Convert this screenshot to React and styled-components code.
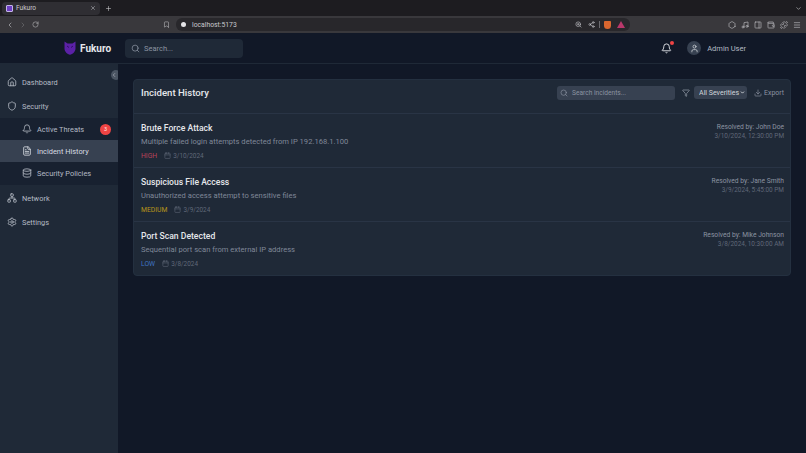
import React from "react";
import styled, { createGlobalStyle } from "styled-components";
import {
  Bell,
  Bookmark,
  Calendar,
  ChevronDown,
  ChevronLeft,
  ChevronRight,
  Database,
  Download,
  FileText,
  Filter,
  Home,
  Menu,
  Music,
  Network,
  Plus,
  Puzzle,
  RotateCw,
  Search,
  Settings,
  Share2,
  Shield,
  User,
  Wallet,
  X,
  ZoomIn,
  PanelRight,
  Hexagon,
} from "lucide-react";

const GlobalStyle = createGlobalStyle`
  html, body, #root { margin: 0; height: 100%; }
  body { background: #111827; font-family: Roboto, "Noto Sans", sans-serif; overflow: hidden; }
  * { box-sizing: border-box; }
`;

const Page = styled.div`
  width: 806px;
  height: 453px;
  display: flex;
  flex-direction: column;
  overflow: hidden;
`;

/* browser chrome */
const TabStrip = styled.div`
  height: 16px;
  background: #1d1c20;
  display: flex;
  align-items: center;
  padding-left: 2px;
  color: #c9c9cc;
`;
const Tab = styled.div`
  width: 98px;
  height: 13px;
  background: #2f2e33;
  border-radius: 4px;
  display: flex;
  align-items: center;
  gap: 3px;
  padding: 0 4px;
  font-size: 6.6px;
  color: #c9c9ce;
`;
const TabTitle = styled.span`
  flex: 1;
`;
const Favicon = styled.span`
  width: 7px;
  height: 7px;
  background: #6d3fc4;
  border: 1px solid #c4b5e8;
  border-radius: 1px;
`;
const NewTab = styled.div`
  margin-left: 5px;
  display: flex;
`;
const Caret = styled.div`
  margin: 0 4px 0 auto;
  display: flex;
`;
const Toolbar = styled.div`
  height: 17px;
  background: #39383c;
  display: flex;
  align-items: center;
  padding: 0 5px 0 6px;
  color: #b8b8bc;
`;
const NavButtons = styled.div`
  display: flex;
  gap: 5px;
  width: 157px;
`;
const BookmarkSlot = styled.div`
  display: flex;
  width: 13px;
`;
const UrlBar = styled.div`
  width: 454px;
  height: 13px;
  background: #28272b;
  border-radius: 6px;
  display: flex;
  align-items: center;
  padding: 0 5px;
  font-size: 6.8px;
  color: #c9c9ce;
`;
const UrlDot = styled.span`
  width: 5px;
  height: 5px;
  border-radius: 50%;
  background: #e4e4e7;
  margin-right: 6px;
`;
const UrlText = styled.span`
  flex: 1;
`;
const UrlIcons = styled.div`
  display: flex;
  align-items: center;
  gap: 6px;
`;
const Divider = styled.span`
  width: 1px;
  height: 7px;
  background: #6b6b70;
  margin: 0 -2px;
`;
const BraveMark = styled.span`
  width: 7px;
  height: 8px;
  background: #d9662f;
  border-radius: 1px 1px 4px 4px;
`;
const Triangle = styled.span`
  width: 0;
  height: 0;
  border-left: 4px solid transparent;
  border-right: 4px solid transparent;
  border-bottom: 7px solid #b9386b;
`;
const ExtIcons = styled.div`
  margin-left: auto;
  display: flex;
  gap: 5px;
`;

/* app */
const Header = styled.header`
  height: 31px;
  background: #111827;
  border-bottom: 1px solid #1f2937;
  display: flex;
  align-items: center;
  padding: 0 60px 0 64px;
`;
const Brand = styled.div`
  display: flex;
  align-items: center;
  gap: 4px;
  width: 61px;
  font-size: 10px;
  font-weight: 700;
  color: #e5e7eb;
`;
const HeaderSearch = styled.div`
  width: 118px;
  height: 19px;
  background: #1f2937;
  border-radius: 4px;
  display: flex;
  align-items: center;
  gap: 4px;
  padding: 0 6px;
  font-size: 7.5px;
  color: #8b93a1;
`;
const HeaderRight = styled.div`
  margin-left: auto;
  display: flex;
  align-items: center;
`;
const BellWrap = styled.div`
  position: relative;
  display: flex;
  margin-right: 15px;
  color: #e5e7eb;
`;
const BellDot = styled.span`
  position: absolute;
  top: -2px;
  right: -2px;
  width: 4px;
  height: 4px;
  border-radius: 50%;
  background: #ef4444;
`;
const Avatar = styled.div`
  width: 14px;
  height: 14px;
  border-radius: 50%;
  background: #374151;
  display: flex;
  align-items: center;
  justify-content: center;
  color: #d1d5db;
  margin-right: 6px;
`;
const UserName = styled.span`
  font-size: 7.5px;
  color: #b4bac4;
`;

const Body = styled.div`
  flex: 1;
  display: flex;
  min-height: 0;
`;
const Sidebar = styled.aside`
  width: 118px;
  background: #1f2937;
  padding-top: 6px;
  position: relative;
  overflow: hidden;
  flex-shrink: 0;
`;
const Collapse = styled.div`
  position: absolute;
  top: 6px;
  right: -3px;
  width: 10px;
  height: 10px;
  border-radius: 50%;
  background: #4b5563;
  color: #d1d5db;
  display: flex;
  align-items: center;
`;
const NavItem = styled.div`
  height: 24px;
  display: flex;
  align-items: center;
  gap: 5px;
  padding-left: 7px;
  font-size: 7.4px;
  color: #b4bac4;
`;
const SubList = styled.div`
  background: #182130;
  padding-bottom: 1px;
  margin-bottom: 1px;
`;
const SubItem = styled.div`
  height: 22px;
  display: flex;
  align-items: center;
  gap: 5px;
  padding: 0 7px 0 22px;
  font-size: 7.4px;
  color: ${(p) => (p.$active ? "#d8dce2" : "#b4bac4")};
  background: ${(p) => (p.$active ? "#374151" : "transparent")};
`;
const Badge = styled.span`
  margin-left: auto;
  width: 11px;
  height: 11px;
  border-radius: 50%;
  background: #ef4444;
  color: #fde8e8;
  font-size: 5.5px;
  display: flex;
  align-items: center;
  justify-content: center;
`;

const Main = styled.main`
  flex: 1;
  padding: 15px 15px 0;
  background: #111827;
`;
const Card = styled.section`
  background: #1f2937;
  border-radius: 4px;
  border: 1px solid #243040;
`;
const CardHeader = styled.div`
  height: 33px;
  display: flex;
  align-items: flex-start;
  padding: 5px 6px 0 7px;
`;
const CardTitle = styled.h1`
  margin: 0;
  font-size: 9.6px;
  font-weight: 500;
  line-height: 15px;
  color: #e5e7eb;
`;
const Tools = styled.div`
  margin-left: auto;
  display: flex;
  align-items: center;
  height: 15px;
`;
const IncidentSearch = styled.div`
  width: 118px;
  height: 14px;
  background: #374151;
  border-radius: 3px;
  display: flex;
  align-items: center;
  gap: 4px;
  padding: 0 3px;
  font-size: 6.6px;
  color: #8b93a1;
  margin-right: 7px;
`;
const FilterIcon = styled.div`
  display: flex;
  color: #9ca3af;
  margin-right: 4px;
`;
const SelectWrap = styled.div`
  position: relative;
  display: flex;
  margin-right: 7px;
  color: #e5e7eb;
  svg {
    position: absolute;
    right: 2px;
    top: 4px;
    pointer-events: none;
  }
`;
const SeveritySelect = styled.select`
  appearance: none;
  width: 53px;
  height: 13px;
  background: #374151;
  color: #d1d5db;
  border: none;
  border-radius: 3px;
  font: inherit;
  font-size: 7px;
  padding: 0 0 0 5px;
`;
const ExportButton = styled.div`
  display: flex;
  align-items: center;
  gap: 2px;
  font-size: 6.9px;
  color: #8b93a1;
`;
const Row = styled.article`
  height: 54px;
  border-top: 1px solid #293445;
  display: flex;
  justify-content: space-between;
  padding: 8px 6px 0 7px;
`;
const RowTitle = styled.h2`
  margin: 0;
  font-size: 8.6px;
  font-weight: 500;
  line-height: 13px;
  color: #e5e7eb;
`;
const RowDesc = styled.p`
  margin: 0;
  font-size: 7.6px;
  line-height: 13px;
  color: #7f8897;
`;
const Meta = styled.div`
  display: flex;
  align-items: center;
  margin-top: 2px;
  height: 11px;
  font-size: 6.8px;
  color: #5f6877;
`;
const Severity = styled.span`
  color: ${(p) => p.$color};
  margin-right: 7px;
`;
const DateCell = styled.span`
  display: flex;
  align-items: center;
  gap: 2px;
  font-size: 6.4px;
`;
const RowRight = styled.div`
  text-align: right;
  font-size: 6.7px;
  line-height: 9px;
  color: #8b93a1;
  margin-top: 1px;
`;
const RowTime = styled.div`
  color: #5f6877;
  font-size: 6.45px;
`;

const incidents = [
  { title: "Brute Force Attack", desc: "Multiple failed login attempts detected from IP 192.168.1.100", sev: "HIGH", color: "#b8435a", date: "3/10/2024", by: "John Doe", time: "3/10/2024, 12:30:00 PM" },
  { title: "Suspicious File Access", desc: "Unauthorized access attempt to sensitive files", sev: "MEDIUM", color: "#b8951a", date: "3/9/2024", by: "Jane Smith", time: "3/9/2024, 5:45:00 PM" },
  { title: "Port Scan Detected", desc: "Sequential port scan from external IP address", sev: "LOW", color: "#3f74c4", date: "3/8/2024", by: "Mike Johnson", time: "3/8/2024, 10:30:00 AM" },
];

function OwlLogo() {
  return (
    <svg width="12" height="14" viewBox="0 0 12 14">
      <path d="M0.5 0.5 L3.5 2.5 H8.5 L11.5 0.5 V7.5 C11.5 11 8.5 13 6 13.8 C3.5 13 0.5 11 0.5 7.5 Z" fill="#5b21a6" />
      <path d="M3 5 L5 6.5 M9 5 L7 6.5" stroke="#2e1065" strokeWidth="1" />
    </svg>
  );
}

export default function App() {
  return (
    <Page>
      <GlobalStyle />
      <TabStrip>
        <Tab>
          <Favicon />
          <TabTitle>Fukuro</TabTitle>
          <X size={6} />
        </Tab>
        <NewTab>
          <Plus size={7} />
        </NewTab>
        <Caret>
          <ChevronDown size={7} />
        </Caret>
      </TabStrip>
      <Toolbar>
        <NavButtons>
          <ChevronLeft size={8} />
          <ChevronRight size={8} color="#6f6f73" />
          <RotateCw size={7} />
        </NavButtons>
        <BookmarkSlot>
          <Bookmark size={7} />
        </BookmarkSlot>
        <UrlBar>
          <UrlDot />
          <UrlText>localhost:5173</UrlText>
          <UrlIcons>
            <ZoomIn size={7} />
            <Share2 size={7} />
            <Divider />
            <BraveMark />
            <Triangle />
          </UrlIcons>
        </UrlBar>
        <ExtIcons>
          <Hexagon size={8} />
          <Music size={8} />
          <PanelRight size={8} />
          <Wallet size={8} />
          <Puzzle size={8} />
          <Menu size={8} />
        </ExtIcons>
      </Toolbar>

      <Header>
        <Brand>
          <OwlLogo />
          Fukuro
        </Brand>
        <HeaderSearch>
          <Search size={9} />
          Search...
        </HeaderSearch>
        <HeaderRight>
          <BellWrap>
            <Bell size={11} />
            <BellDot />
          </BellWrap>
          <Avatar>
            <User size={9} />
          </Avatar>
          <UserName>Admin User</UserName>
        </HeaderRight>
      </Header>

      <Body>
        <Sidebar>
          <Collapse>
            <ChevronLeft size={6} />
          </Collapse>
          <NavItem>
            <Home size={10} />
            Dashboard
          </NavItem>
          <NavItem>
            <Shield size={10} />
            Security
          </NavItem>
          <SubList>
            <SubItem>
              <Bell size={10} />
              Active Threats
              <Badge>3</Badge>
            </SubItem>
            <SubItem $active>
              <FileText size={10} />
              Incident History
            </SubItem>
            <SubItem>
              <Database size={10} />
              Security Policies
            </SubItem>
          </SubList>
          <NavItem>
            <Network size={10} />
            Network
          </NavItem>
          <NavItem>
            <Settings size={10} />
            Settings
          </NavItem>
        </Sidebar>
        <Main>
          <Card>
            <CardHeader>
              <CardTitle>Incident History</CardTitle>
              <Tools>
                <IncidentSearch>
                  <Search size={8} />
                  Search incidents...
                </IncidentSearch>
                <FilterIcon>
                  <Filter size={8} />
                </FilterIcon>
                <SelectWrap>
                  <SeveritySelect defaultValue="all">
                    <option value="all">All Severities</option>
                  </SeveritySelect>
                  <ChevronDown size={5} strokeWidth={4} />
                </SelectWrap>
                <ExportButton>
                  <Download size={8} />
                  Export
                </ExportButton>
              </Tools>
            </CardHeader>
            {incidents.map((item) => (
              <Row key={item.title}>
                <div>
                  <RowTitle>{item.title}</RowTitle>
                  <RowDesc>{item.desc}</RowDesc>
                  <Meta>
                    <Severity $color={item.color}>{item.sev}</Severity>
                    <DateCell>
                      <Calendar size={7} />
                      {item.date}
                    </DateCell>
                  </Meta>
                </div>
                <RowRight>
                  <div>Resolved by: {item.by}</div>
                  <RowTime>{item.time}</RowTime>
                </RowRight>
              </Row>
            ))}
          </Card>
        </Main>
      </Body>
    </Page>
  );
}
